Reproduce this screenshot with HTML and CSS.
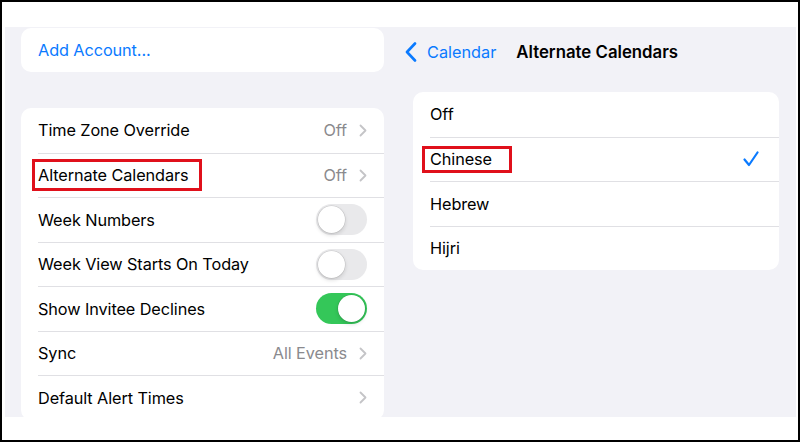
FILE: index.html
```html
<html>

<head>
  <meta charset="utf-8" />
  <link rel="stylesheet" href="styles.css">
</head>

<body>
  <div class="frame">
    <div class="screen">

      <!-- calendar settings -->
      <div class="pane pane-left">
        <div class="group">
          <div class="row">
            <span class="link">Add Account...</span>
          </div>
        </div>

        <div class="group group-settings">
          <div class="row">
            <span class="label">Time Zone Override</span>
            <span class="detail">Off</span>
            <svg class="chevron" viewBox="0 0 8 13"><path d="M1.5 1.5 L6.5 6.5 L1.5 11.5" /></svg>
          </div>
          <div class="row">
            <span class="label marked marked-left">Alternate Calendars</span>
            <span class="detail">Off</span>
            <svg class="chevron" viewBox="0 0 8 13"><path d="M1.5 1.5 L6.5 6.5 L1.5 11.5" /></svg>
          </div>
          <div class="row">
            <span class="label">Week Numbers</span>
            <span class="toggle"><span class="knob"></span></span>
          </div>
          <div class="row">
            <span class="label">Week View Starts On Today</span>
            <span class="toggle"><span class="knob"></span></span>
          </div>
          <div class="row">
            <span class="label">Show Invitee Declines</span>
            <span class="toggle on"><span class="knob"></span></span>
          </div>
          <div class="row">
            <span class="label">Sync</span>
            <span class="detail">All Events</span>
            <svg class="chevron" viewBox="0 0 8 13"><path d="M1.5 1.5 L6.5 6.5 L1.5 11.5" /></svg>
          </div>
          <div class="row">
            <span class="label">Default Alert Times</span>
            <svg class="chevron" viewBox="0 0 8 13"><path d="M1.5 1.5 L6.5 6.5 L1.5 11.5" /></svg>
          </div>
        </div>
      </div>

      <!-- alternate calendars picker -->
      <div class="pane pane-right">
        <div class="navbar">
          <span class="back">
            <svg class="back-icon" viewBox="0 0 12 20"><path d="M10 1.5 L2 10 L10 18.5" /></svg>
            Calendar
          </span>
          <span class="title">Alternate Calendars</span>
        </div>

        <div class="group group-choices">
          <div class="row"><span class="label">Off</span></div>
          <div class="row">
            <span class="label marked marked-right">Chinese</span>
            <svg class="check" viewBox="0 0 16 16"><path d="M1.5 8.5 L6 14 L14.5 1.5" /></svg>
          </div>
          <div class="row"><span class="label">Hebrew</span></div>
          <div class="row"><span class="label">Hijri</span></div>
        </div>
      </div>

    </div>
  </div>
</body>

</html>
```

FILE: styles.css
```css
body {
  margin: 0;
  font-family: Inter, "Noto Sans", sans-serif;
  color: #000;
}

.frame {
  box-sizing: border-box;
  width: 800px;
  height: 442px;
  border: 2px solid #000;
  background-color: #fff;
  padding: 25px 2px 23px 3px;
}

.screen {
  display: flex;
  height: 100%;
  background-color: #f2f2f7;
  overflow: hidden;
}

.pane-left {
  width: 379px;
  padding: 1px 0 0 16px;
  box-sizing: border-box;
}

.pane-right {
  flex: 1;
  padding: 0 17px 0 29px;
}

.group {
  background-color: #fff;
  border-radius: 10px;
}

.group-settings {
  margin-top: 36px;
}

.row {
  display: flex;
  align-items: center;
  height: 44px;
  padding: 0 17px 0 17px;
  font-size: 16.3px;
  letter-spacing: -0.1px;
}

.group-settings .row,
.group-choices .row {
  height: 44.5px;
  padding-left: 0;
  margin-left: 17px;
}

.group-settings .row + .row,
.group-choices .row + .row {
  border-top: 1px solid #e0e0e4;
  height: 43.5px;
}

.link {
  color: #0a7aff;
}

.label {
  flex: 1;
}

.detail {
  color: #8a8a8e;
  margin-right: 12px;
}

.chevron {
  width: 8px;
  height: 13px;
  fill: none;
  stroke: #c4c4c7;
  stroke-width: 1.8;
  stroke-linecap: round;
  stroke-linejoin: round;
}

/* switches */
.toggle {
  position: relative;
  width: 51px;
  height: 31px;
  border-radius: 16px;
  background-color: #e9e9eb;
}

.toggle .knob {
  position: absolute;
  top: 2px;
  left: 2px;
  width: 27px;
  height: 27px;
  border-radius: 50%;
  background-color: #fff;
  box-shadow: 0 0 0 0.5px rgba(0, 0, 0, 0.12), 0 2px 4px rgba(0, 0, 0, 0.15);
}

.toggle.on {
  background-color: #34c759;
}

.toggle.on .knob {
  left: 22px;
}

/* red highlight boxes */
.marked {
  position: relative;
}

.marked::after {
  content: "";
  position: absolute;
  box-sizing: border-box;
  border: 3px solid #e0101b;
}

.marked-left::after {
  left: -6px;
  width: 170px;
  top: -6px;
  bottom: -6px;
}

.marked-right::after {
  left: -8px;
  width: 90px;
  top: -3.5px;
  bottom: -3.5px;
}

/* navigation bar */
.navbar {
  display: flex;
  align-items: center;
  height: 49px;
  margin-left: -8px;
  margin-bottom: 16px;
  font-size: 16.3px;
}

.back {
  display: flex;
  align-items: center;
  color: #0a7aff;
  gap: 10px;
  margin-right: 20px;
}

.back-icon {
  width: 12px;
  height: 20px;
  fill: none;
  stroke: #0a7aff;
  stroke-width: 2.6;
  stroke-linecap: round;
  stroke-linejoin: round;
}

.title {
  font-size: 16.8px;
  font-weight: 600;
}

.check {
  width: 16px;
  height: 16px;
  margin-right: 3px;
  fill: none;
  stroke: #0a7aff;
  stroke-width: 2.2;
  stroke-linecap: round;
  stroke-linejoin: round;
}
```
